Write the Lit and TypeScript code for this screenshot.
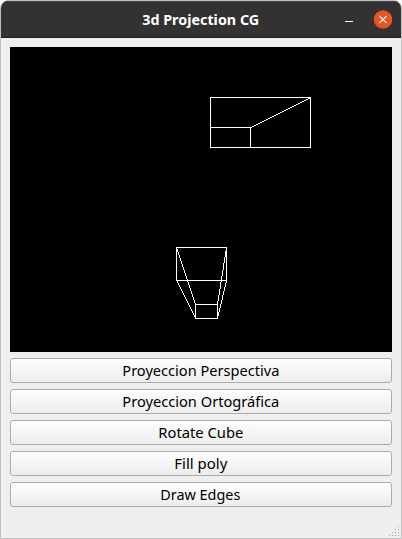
import { LitElement, html, css, svg } from "lit";
import { customElement } from "lit/decorators.js";

type Segment = [number, number, number, number];

const SEGMENTS: Segment[] = [
  [200, 50, 300, 50], [300, 50, 300, 100], [200, 100, 300, 100], [200, 50, 200, 100],
  [200, 80, 240, 80], [240, 80, 240, 100], [240, 80, 300, 50],
  [166, 200, 216, 200], [216, 200, 216, 233], [166, 233, 216, 233], [166, 200, 166, 233],
  [185, 257, 207, 257], [207, 257, 207, 271], [185, 271, 207, 271], [185, 257, 185, 271],
  [166, 200, 185, 257], [216, 200, 207, 257], [166, 233, 185, 271], [216, 233, 207, 271],
];

/** Every pixel of a segment, one per step along its longer axis. */
function rasterPath([x1, y1, x2, y2]: Segment): string {
  const steps = Math.max(Math.abs(x2 - x1), Math.abs(y2 - y1));
  if (x1 === x2) return `M${x1} ${y1}h1v${steps + 1}h-1z`;
  if (y1 === y2) return `M${x1} ${y1}h${steps + 1}v1h-${steps + 1}z`;
  let d = "";
  for (let i = 0; i <= steps; i++) {
    const x = Math.round(x1 + ((x2 - x1) * i) / steps);
    const y = Math.round(y1 + ((y2 - y1) * i) / steps);
    d += `M${x} ${y}h1v1h-1z`;
  }
  return d;
}

const ACTIONS = [
  { label: "Proyeccion Perspectiva", width: 157 },
  { label: "Proyeccion Ortográfica", width: 157 },
  { label: "Rotate Cube", width: 85 },
  { label: "Fill poly", width: 53 },
  { label: "Draw Edges", width: 80 },
];

@customElement("app-root")
export class AppRoot extends LitElement {
  static styles = css`
    :host { display: block; background: #fff; }
    .window {
      box-sizing: border-box; width: 402px; height: 539px;
      display: flex; flex-direction: column; position: relative;
      border: 1px solid #c0c0c0; border-radius: 8px 8px 0 0;
      background: #efefef; overflow: hidden;
      font-family: "Noto Sans", sans-serif; color: #000;
    }
    .titlebar {
      box-sizing: border-box; height: 37px; flex: none;
      display: grid; grid-template-columns: 1fr auto 1fr; align-items: center;
      background: #333131;
      border-bottom: 1px solid #1f1d1d; border-top: 1px solid #454343;
    }
    .title { grid-column: 2; display: block; overflow: visible; }
    .title text { font-size: 14px; font-weight: 700; fill: #fff; }
    .controls { display: flex; justify-content: flex-end; align-items: center; padding-right: 9px; }
    .controls svg { display: block; }
    .content { display: flex; flex-direction: column; gap: 6px; padding: 9px; }
    .canvas { display: block; width: 382px; height: 305px; background: #000; }
    button {
      box-sizing: border-box; height: 25px; width: 100%; margin: 0; padding: 0;
      display: flex; align-items: center; justify-content: center;
      border: 1px solid #ababab; border-radius: 3px;
      background: linear-gradient(#fdfdfd, #ededed);
      font-family: inherit;
    }
    .label { display: block; overflow: visible; }
    .label text { font-size: 14.5px; fill: #000; }
    .grip { position: absolute; right: 2px; bottom: 2px; }
  `;

  render() {
    const dots = [];
    for (let row = 0; row < 4; row++)
      for (let col = 3 - row; col < 4; col++)
        dots.push(svg`<rect x=${col * 3} y=${row * 3} width="1" height="1" fill="#a5a5a5"/>`);
    return html`
      <div class="window">
        <div class="titlebar">
          <svg class="title" width="117" height="20">
            <text x="-0.8" y="15" textLength="117" lengthAdjust="spacingAndGlyphs">3d Projection CG</text>
          </svg>
          <div class="controls">
            <svg width="48" height="20" viewBox="0 0 48 20">
              <path d="M1 11.5h8" stroke="#fff" shape-rendering="crispEdges"/>
              <circle cx="39" cy="9.5" r="9.3" fill="#e95420"/>
              <path d="M35.3 5.8l7.4 7.4M42.7 5.8l-7.4 7.4" stroke="#fff" stroke-width="1.2"/>
            </svg>
          </div>
        </div>
        <div class="content">
          <svg class="canvas" viewBox="0 0 382 305" shape-rendering="crispEdges">
            <path fill="#fff" d=${SEGMENTS.map(rasterPath).join("")} />
          </svg>
          ${ACTIONS.map(({ label, width }) => html`
            <button>
              <svg class="label" width=${width} height="19">
                <text x="-0.7" y="15" textLength=${width} lengthAdjust="spacingAndGlyphs">${label}</text>
              </svg>
            </button>`)}
        </div>
        <svg class="grip" width="10" height="10" shape-rendering="crispEdges">${dots}</svg>
      </div>
    `;
  }
}
